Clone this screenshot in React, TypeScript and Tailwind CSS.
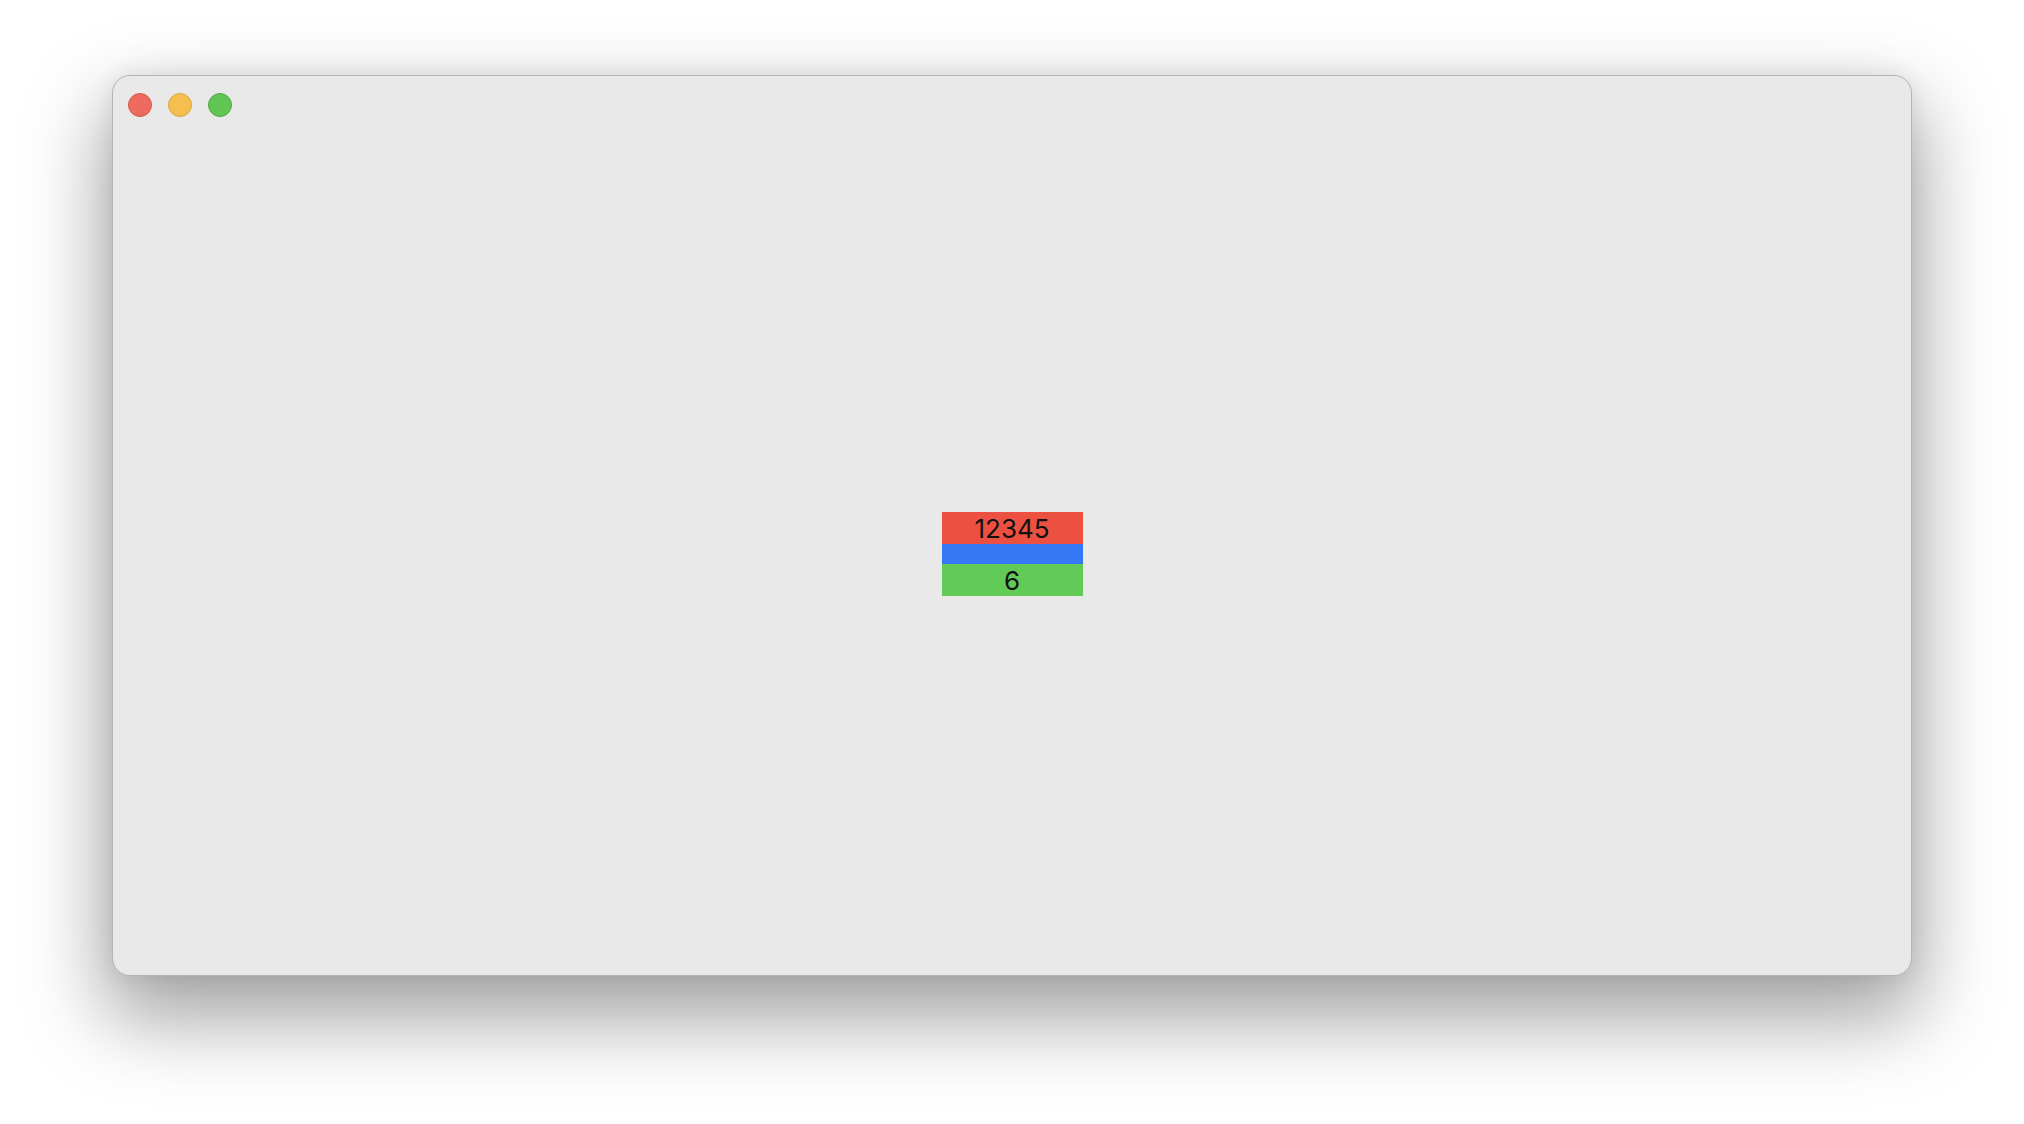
import React from "react";

export default function App() {
  return (
    <div className="w-[2024px] h-[1124px] bg-white overflow-hidden pt-[75px] pl-[112px]" style={{ fontFamily: "Inter, 'Noto Sans', sans-serif" }}>
      <div className="w-[1800px] h-[901px] rounded-[18px] bg-[#e9e9e9] border border-[#b4b4b4] shadow-[0_36px_80px_8px_rgba(0,0,0,0.36),0_0_24px_rgba(0,0,0,0.08)] flex flex-col overflow-hidden">
        <div className="h-[57px] flex items-center pl-[15px] gap-[16px] shrink-0">
          <div className="w-[24px] h-[24px] rounded-full bg-[#ec6a5e] border border-[#d25a4f]" />
          <div className="w-[24px] h-[24px] rounded-full bg-[#f5bf4f] border border-[#d9a53f]" />
          <div className="w-[24px] h-[24px] rounded-full bg-[#61c554] border border-[#51a845]" />
        </div>
        <div className="flex-1 flex items-center justify-center">
          <div className="w-[141px] flex flex-col">
            <div className="h-[32px] bg-[#ec5040] flex items-center justify-center pt-[2px] text-[26px] leading-none text-[#111]">12345</div>
            <div className="h-[20px] bg-[#3478f6]" />
            <div className="h-[32px] bg-[#62cb57] flex items-center justify-center pt-[2px] text-[26px] leading-none text-[#111]">6</div>
          </div>
        </div>
      </div>
    </div>
  );
}
